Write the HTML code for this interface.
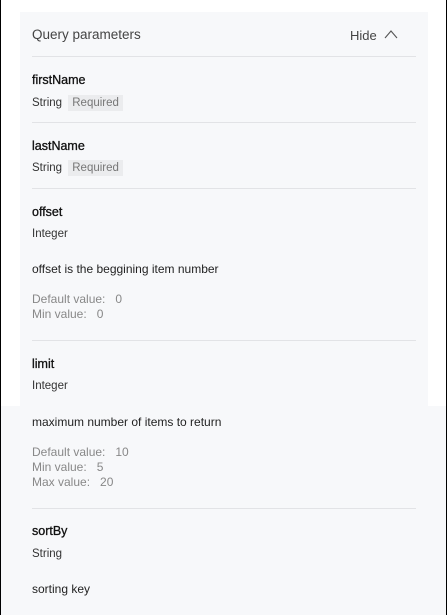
<!DOCTYPE html>
<html><head><style>
html,body{margin:0;padding:0}
body{width:447px;height:615px;background:#fff;position:relative;overflow:hidden;font-family:"Liberation Sans",sans-serif;color:#222}
.bl{position:absolute;left:0;top:0;width:1px;height:615px;background:#000}
.br{position:absolute;right:0;top:0;width:1px;height:615px;background:#000}
.panel{position:absolute;left:20px;top:12px;width:408px;height:394px;background:#f7f8fa}
.panel2{position:absolute;left:1px;top:406px;width:445px;height:209px;background:#f7f8fa}
.t{position:absolute;left:32px;white-space:nowrap}
.hr{position:absolute;left:32px;width:384px;height:1px;background:#e2e3e6}
.h{font-size:13.5px;color:#444}
.n{font-size:12.5px;color:#111;-webkit-text-stroke:0.3px #111}
.s{font-size:11.5px;color:#333}
.d{font-size:12px;color:#222}
.g{font-size:12px;color:#888;line-height:15px}
.req{background:#ebecee;color:#777;padding:2px 4px;margin-left:3px}
</style></head><body>
<div class="panel"></div><div class="panel2"></div>
<div class="bl"></div><div class="br"></div>
<div class="t h" style="top:27px">Query parameters</div>
<div class="t h" style="left:350px;top:28px;font-size:13px">Hide</div>
<svg style="position:absolute;left:384px;top:29px" width="14" height="10"><path d="M1 9 L7 2 L13 9" fill="none" stroke="#555" stroke-width="1.1"/></svg>
<div class="hr" style="top:56px"></div>
<div class="t n" style="top:73px">firstName</div>
<div class="t s" style="top:97px">String <span class="req">Required</span></div>
<div class="hr" style="top:122px"></div>
<div class="t n" style="top:139px">lastName</div>
<div class="t s" style="top:162px">String <span class="req">Required</span></div>
<div class="hr" style="top:188px"></div>
<div class="t n" style="top:205px">offset</div>
<div class="t s" style="top:228px">Integer</div>
<div class="t d" style="top:262px">offset is the beggining item number</div>
<div class="t g" style="top:292px">Default value:&nbsp;&nbsp; 0<br>Min value:&nbsp;&nbsp; 0</div>
<div class="hr" style="top:340px"></div>
<div class="t n" style="top:357px">limit</div>
<div class="t s" style="top:380px">Integer</div>
<div class="t d" style="top:415px">maximum number of items to return</div>
<div class="t g" style="top:445px">Default value:&nbsp;&nbsp; 10<br>Min value:&nbsp;&nbsp; 5<br>Max value:&nbsp;&nbsp; 20</div>
<div class="hr" style="top:508px"></div>
<div class="t n" style="top:524px">sortBy</div>
<div class="t s" style="top:548px">String</div>
<div class="t d" style="top:582px">sorting key</div>
</body></html>
